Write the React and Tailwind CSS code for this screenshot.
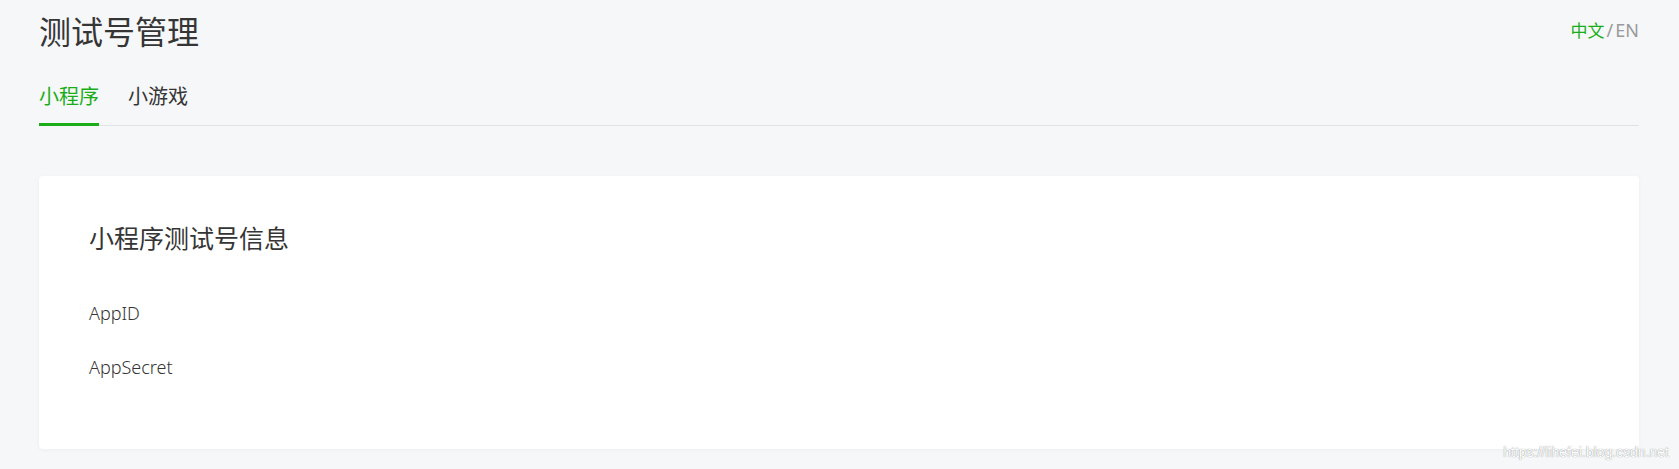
import React from 'react';

const font = { fontFamily: '"Noto Sans", "Noto Sans CJK SC", sans-serif' };

const tabs = [
  { name: '小程序', key: 'mini' },
  { name: '小游戏', key: 'game' },
];

// Card with the test account info
const InfoCard = () => (
  <div className="mt-[50px] rounded-[4px] bg-white pl-[50px] pr-[50px] pt-[46px] pb-[70px] shadow-[0_1px_4px_rgba(0,0,0,0.04)]">
    <h2 className="text-[25px] leading-[33px] font-normal text-[#353535]">小程序测试号信息</h2>
    <div className="mt-[46px] text-[18px] leading-[24px] font-light text-[#353535]">AppID</div>
    <div className="mt-[30px] text-[18px] leading-[24px] font-light text-[#353535]">AppSecret</div>
  </div>
);

const App = () => {
  const [activeTab, setActiveTab] = React.useState('mini');

  return (
    <div className="relative min-h-[469px] bg-[#f6f7f9] pl-[39px] pr-[40px]" style={font}>
      {/* Header */}
      <div className="flex h-[64px] items-start justify-between pt-[12px]">
        <h1 className="text-[32px] leading-[40px] font-normal text-[#353535]">测试号管理</h1>
        <div className="pt-[6px] text-[17px] leading-[24px]">
          <span className="text-[#1aad19]">中文</span>
          <span className="mx-[2px] text-[18px] text-[#9a9a9a]">/</span>
          <span className="text-[18px] text-[#9a9a9a]">EN</span>
        </div>
      </div>

      {/* Tabs */}
      <div className="mt-[12px] flex gap-[29px] border-b border-[#e1e2e4]">
        {tabs.map((tab) => (
          <button
            key={tab.key}
            onClick={() => setActiveTab(tab.key)}
            className={`-mb-px pt-[7px] pb-[12px] text-[20px] leading-[28px] border-b-[3px] ${
              activeTab === tab.key ? 'text-[#1aad19] border-[#1aad19]' : 'text-[#353535] border-transparent'
            }`}
          >
            {tab.name}
          </button>
        ))}
      </div>

      <InfoCard />

      {/* watermark */}
      <div
        className="absolute right-[10px] bottom-[9px] text-[14px] leading-[16px] text-white [text-shadow:0_0_1px_rgba(0,0,0,0.55)]"
        style={{ fontFamily: '"Liberation Sans", Arial, sans-serif' }}
      >
        https://lihefei.blog.csdn.net
      </div>
    </div>
  );
};

export default App;
